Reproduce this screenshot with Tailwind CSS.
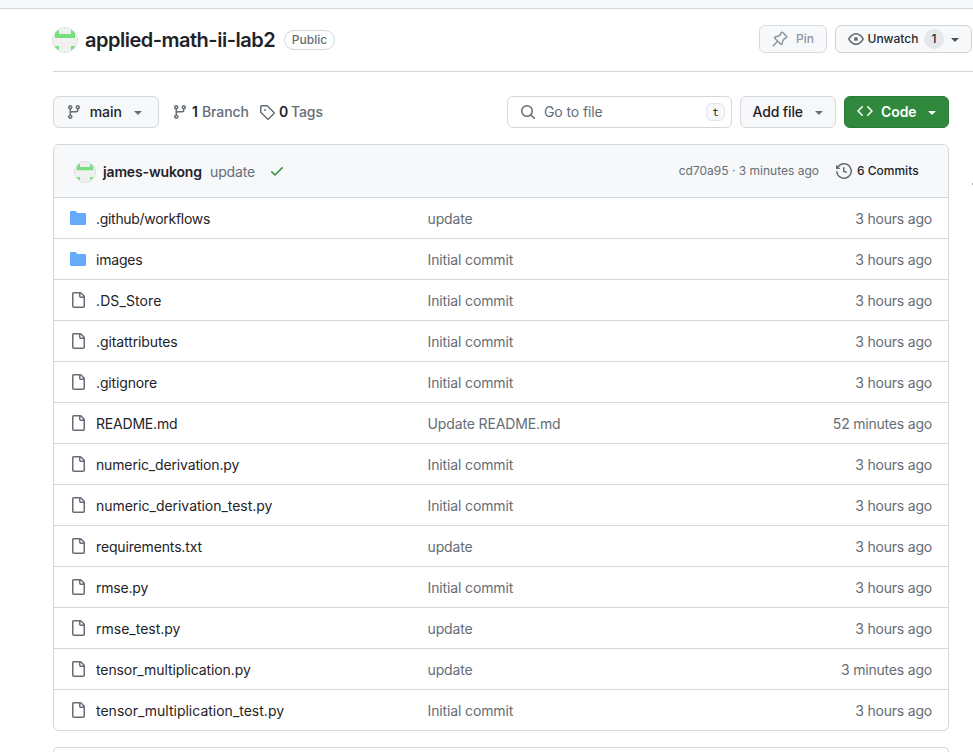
<!DOCTYPE html>
<html lang="en">
<head>
<meta charset="utf-8">
<title>applied-math-ii-lab2</title>
<script src="https://cdn.jsdelivr.net/npm/@tailwindcss/browser@4"></script>
</head>
<body class="relative h-[752px] w-[973px] overflow-hidden bg-white font-['Inter','Liberation_Sans',sans-serif] text-sm text-[#1f2328]">
<svg class="hidden">
  <symbol id="branch" viewBox="0 0 16 16"><path d="M9.5 3.25a2.25 2.25 0 1 1 3 2.122V6A2.5 2.5 0 0 1 10 8.5H6a1 1 0 0 0-1 1v1.128a2.251 2.251 0 1 1-1.5 0V5.372a2.25 2.25 0 1 1 1.5 0v1.836A2.493 2.493 0 0 1 6 7h4a1 1 0 0 0 1-1v-.628A2.25 2.25 0 0 1 9.5 3.25Zm-6 0a.75.75 0 1 0 1.5 0 .75.75 0 0 0-1.5 0Zm8.25-.75a.75.75 0 1 0 0 1.5.75.75 0 0 0 0-1.5ZM4.25 12a.75.75 0 1 0 0 1.5.75.75 0 0 0 0-1.5Z"/></symbol>
  <symbol id="caret" viewBox="0 0 16 16"><path d="m4.427 7.427 3.396 3.396a.25.25 0 0 0 .354 0l3.396-3.396A.25.25 0 0 0 11.396 7H4.604a.25.25 0 0 0-.177.427Z"/></symbol>
  <symbol id="folder" viewBox="0 0 16 16"><path d="M1 1A1 1 0 0 0 0 2v12a1 1 0 0 0 1 1h14a1 1 0 0 0 1-1V4a1 1 0 0 0-1-1H7.5a.25.25 0 0 1-.2-.1l-.9-1.2C6.07 1.26 5.55 1 5 1H1Z"/></symbol>
  <symbol id="file" viewBox="0 0 16 16"><path d="M2 1.75C2 .784 2.784 0 3.75 0h6.586c.464 0 .909.184 1.237.513l2.914 2.914c.329.328.513.773.513 1.237v9.586A1.75 1.75 0 0 1 13.25 16h-9.5A1.75 1.75 0 0 1 2 14.25Zm1.75-.25a.25.25 0 0 0-.25.25v12.5c0 .138.112.25.25.25h9.5a.25.25 0 0 0 .25-.25V6h-2.75A1.75 1.75 0 0 1 9 4.25V1.5Zm6.75.062V4.25c0 .138.112.25.25.25h2.688l-.011-.013-2.914-2.914-.013-.011Z"/></symbol>
  <symbol id="avatar" viewBox="0 0 24 24"><path fill="#f0f0f0" d="M0 0h24v24H0z"/><path fill="#76e07e" d="M2 2h4v4h12V2h4v8H2zM2 18h4v4H2zM18 18h4v4h-4z"/></symbol>
</svg>

<div class="h-[9px] border-b border-[#d0d7de] bg-[#f6f8fa]"></div>

<header class="ml-[53px] flex h-[63px] items-center border-b border-[#d0d7de] pb-px">
  <svg class="-ml-px size-[26px] rounded-full border border-[#d9dde1]"><use href="#avatar"/></svg>
  <h1 class="ml-[7px] w-[192px] whitespace-nowrap text-[20px] font-semibold leading-7 tracking-[-0.5px]">applied-math-ii-lab2</h1>
  <span class="ml-[7px] flex h-5 w-[51px] items-center justify-center rounded-full border border-[#d0d7de] text-xs font-medium text-[#656d76]">Public</span>
  <div class="mb-0.5 ml-auto flex gap-2">
    <button class="flex h-7 w-[68px] items-center rounded-md border border-[#d8dce1] bg-[#f6f8fa] pl-3 text-xs font-medium text-[#8c959f]">
      <svg class="mr-2 size-4 fill-current" viewBox="0 0 16 16"><path d="m11.294.984 3.722 3.722a1.75 1.75 0 0 1-.504 2.826l-1.327.613a3.089 3.089 0 0 0-1.707 2.084l-.584 2.454c-.317 1.332-1.972 1.8-2.94.832L5.75 11.311 1.78 15.28a.749.749 0 1 1-1.06-1.06l3.969-3.97-2.204-2.204c-.968-.968-.5-2.623.832-2.94l2.454-.584a3.08 3.08 0 0 0 2.084-1.707l.613-1.327a1.75 1.75 0 0 1 2.826-.504ZM6.283 9.723l2.732 2.731a.25.25 0 0 0 .42-.119l.584-2.454a4.586 4.586 0 0 1 2.537-3.098l1.328-.613a.25.25 0 0 0 .072-.404l-3.722-3.722a.25.25 0 0 0-.404.072l-.613 1.328a4.584 4.584 0 0 1-3.098 2.537l-2.454.584a.25.25 0 0 0-.119.42l2.731 2.732Z"/></svg>Pin
    </button>
    <button class="mr-px flex h-7 w-[137px] items-center whitespace-nowrap rounded-md border border-[#d0d4d9] bg-[#f6f8fa] pl-3 text-xs font-medium text-[#24292f]">
      <svg class="mr-[3.5px] size-4 shrink-0 fill-[#656d76]" viewBox="0 0 16 16"><path d="M8 2c1.981 0 3.671.992 4.933 2.078 1.27 1.091 2.187 2.345 2.637 3.023a1.62 1.62 0 0 1 0 1.798c-.45.678-1.367 1.932-2.637 3.023C11.67 13.008 9.981 14 8 14c-1.981 0-3.671-.992-4.933-2.078C1.797 10.83.88 9.576.43 8.898a1.62 1.62 0 0 1 0-1.798c.45-.677 1.367-1.931 2.637-3.022C4.33 2.992 6.019 2 8 2ZM1.679 7.932a.12.12 0 0 0 0 .136c.411.622 1.241 1.75 2.366 2.717C5.176 11.758 6.527 12.5 8 12.5c1.473 0 2.825-.742 3.955-1.715 1.124-.967 1.954-2.096 2.366-2.717a.12.12 0 0 0 0-.136c-.412-.621-1.242-1.75-2.366-2.717C10.824 4.242 9.473 3.5 8 3.5c-1.473 0-2.825.742-3.955 1.715-1.124.967-1.954 2.096-2.366 2.717ZM8 10a2 2 0 1 1-.001-3.999A2 2 0 0 1 8 10Z"/></svg>
      <span class="w-[50px]">Unwatch</span>
      <span class="ml-[6.5px] flex size-5 items-center justify-center rounded-full bg-[#e5e8ea]">1</span>
      <svg class="ml-[3px] size-4 fill-[#4b5159]"><use href="#caret"/></svg>
    </button>
  </div>
</header>

<main class="ml-[53px] w-[896px] pt-6">
  <div class="flex h-8 items-center">
    <button class="flex h-8 w-[106px] items-center rounded-md border border-[#d4d8dd] bg-[#f6f8fa] pl-3 font-medium">
      <svg class="mr-[7.5px] size-4 fill-[#656d76]"><use href="#branch"/></svg><span class="w-[32.5px] tracking-[-0.1px]">main</span>
      <svg class="ml-2 size-4 fill-[#656d76]"><use href="#caret"/></svg>
    </button>
    <a class="ml-[13px] flex w-[87px] items-center whitespace-nowrap font-medium tracking-[-0.05px] text-[#656d76]"><svg class="mr-1 size-4 fill-[#656d76]"><use href="#branch"/></svg><b class="mr-1 font-semibold text-[#1f2328]">1</b>Branch</a>
    <a class="flex items-center whitespace-nowrap font-medium tracking-[-0.15px] text-[#656d76]"><svg class="mr-1 size-4 fill-[#656d76]" viewBox="0 0 16 16"><path d="M1 7.775V2.75C1 1.784 1.784 1 2.75 1h5.025c.464 0 .91.184 1.238.513l6.25 6.25a1.75 1.75 0 0 1 0 2.474l-5.026 5.026a1.75 1.75 0 0 1-2.474 0l-6.25-6.25A1.752 1.752 0 0 1 1 7.775Zm1.5 0c0 .066.026.13.073.177l6.25 6.25a.25.25 0 0 0 .354 0l5.025-5.025a.25.25 0 0 0 0-.354l-6.25-6.25a.25.25 0 0 0-.177-.073H2.75a.25.25 0 0 0-.25.25ZM6 5a1 1 0 1 1 0 2 1 1 0 0 1 0-2Z"/></svg><b class="mr-[3px] font-semibold text-[#1f2328]">0</b>Tags</a>
    <div class="ml-auto flex gap-2">
      <div class="flex h-8 w-[225px] items-center rounded-md border border-[#d0d7de] pl-3 pr-1.5 tracking-[-0.1px] text-[#656d76]">
        <svg class="mr-2 size-4 fill-current" viewBox="0 0 16 16"><path d="M10.68 11.74a6 6 0 0 1-7.922-8.982 6 6 0 0 1 8.982 7.922l3.04 3.04a.749.749 0 1 1-1.06 1.06ZM11.5 7a4.499 4.499 0 1 0-8.997 0A4.499 4.499 0 0 0 11.5 7Z"/></svg>Go to file
        <kbd class="ml-auto flex h-[18px] w-[19px] items-center justify-center rounded-md border border-[#e1e6eb] bg-[#f6f8fa] pt-px font-['DejaVu_Sans_Mono',monospace] text-[11px] text-[#1f2328]">t</kbd>
      </div>
      <button class="flex h-8 w-24 items-center whitespace-nowrap rounded-md border border-[#d4d8dd] bg-[#f6f8fa] pl-[11.5px] font-medium tracking-[-0.15px]"><span class="w-[50.5px]">Add file</span><svg class="ml-2 size-4 fill-[#656d76]"><use href="#caret"/></svg></button>
      <button class="flex h-8 w-[105px] items-center rounded-md border border-[#2c7a3a] bg-[#2f883b] pl-3 font-semibold tracking-[-0.1px] text-white"><svg class="mb-0.5 mr-2 size-4 fill-current" viewBox="0 0 16 16"><path d="m11.28 3.22 4.25 4.25a.75.75 0 0 1 0 1.06l-4.25 4.25a.749.749 0 1 1-1.06-1.06L13.94 8l-3.72-3.72a.749.749 0 1 1 1.06-1.06Zm-6.56 0a.749.749 0 1 1 1.06 1.06L2.06 8l3.72 3.72a.749.749 0 1 1-1.06 1.06L.47 8.53a.75.75 0 0 1 0-1.06Z"/></svg><span class="w-[35px]">Code</span><svg class="ml-2 size-4 fill-current"><use href="#caret"/></svg></button>
    </div>
  </div>

  <section class="mt-4 h-[587px] overflow-hidden rounded-md border border-[#d0d7de]">
    <div class="flex h-[53px] items-center border-b border-[#d0d7de] bg-[#f6f8fa] pl-5 pr-[28px] pt-0.5">
      <svg class="size-[22px] rounded-full border border-[#d9dde1]"><use href="#avatar"/></svg>
      <span class="ml-[7px] w-[99px] whitespace-nowrap font-semibold tracking-[-0.15px]">james-wukong</span>
      <span class="ml-2 w-[45px] tracking-[-0.15px] text-[#656d76]">update</span>
      <svg class="mb-0.5 ml-[14px] size-4 fill-[#2f883b]" viewBox="0 0 16 16"><path d="M13.78 4.22a.75.75 0 0 1 0 1.06l-7.25 7.25a.75.75 0 0 1-1.06 0L2.22 9.28a.749.749 0 1 1 1.06-1.06L6 10.94l6.72-6.72a.75.75 0 0 1 1.06 0Z"/></svg>
      <span class="mb-0.5 ml-auto whitespace-nowrap text-xs text-[#656d76]">cd70a95 · 3 minutes ago</span>
      <svg class="mb-0.5 ml-[17px] size-4 fill-[#656d76]" viewBox="0 0 16 16"><path d="m.427 1.927 1.215 1.215a8.002 8.002 0 1 1-1.6 5.685.75.75 0 1 1 1.493-.154 6.5 6.5 0 1 0 1.18-4.458l1.358 1.358A.25.25 0 0 1 3.896 6H.25A.25.25 0 0 1 0 5.75V2.104a.25.25 0 0 1 .427-.177ZM7.75 4a.75.75 0 0 1 .75.75v2.992l2.028.812a.75.75 0 0 1-.557 1.392l-2.5-1A.751.751 0 0 1 7 8.25v-3.5A.75.75 0 0 1 7.75 4Z"/></svg>
      <span class="mb-0.5 ml-[5px] w-[63px] whitespace-nowrap text-xs font-medium">6 Commits</span>
    </div>
    <div id="files"></div>
  </section>

  <section class="mt-4 h-[5px] rounded-t-md border border-b-0 border-[#d0d7de]"></section>
</main>
<div class="absolute left-[972px] top-[183px] h-[2px] w-px bg-[#a9afb6]"></div>

<script>
const H = '3 hours ago', I = 'Initial commit', U = 'update';
const files = [
  ['.github/workflows', U, H, 1], ['images', I, H, 1], ['.DS_Store', I, H], ['.gitattributes', I, H],
  ['.gitignore', I, H], ['README.md', 'Update README.md', '52 minutes ago'], ['numeric_derivation.py', I, H],
  ['numeric_derivation_test.py', I, H], ['requirements.txt', U, H], ['rmse.py', I, H], ['rmse_test.py', U, H],
  ['tensor_multiplication.py', U, '3 minutes ago'], ['tensor_multiplication_test.py', I, H]];
// Per-name letter spacing; everything else uses the slightly tight default.
const tight = { '.github/workflows': 'tracking-[-0.3px]', '.DS_Store': 'tracking-[0.1px]', 'README.md': 'tracking-[-0.2px]',
  'numeric_derivation.py': 'tracking-[-0.15px]', 'requirements.txt': 'tracking-[-0.15px]', 'images': 'tracking-[-0.2px]', 'rmse.py': 'tracking-[-0.2px]',
  'rmse_test.py': 'tracking-[0px]', '.gitignore': 'tracking-[-0.15px]', 'tensor_multiplication_test.py': 'tracking-[0px]', 'numeric_derivation_test.py': 'tracking-[-0.04px]' };
document.getElementById('files').innerHTML = files.map(([name, msg, age, dir]) => `
  <div class="flex h-[41px] items-center border-b border-[#d0d7de] px-4 pt-0.5 last:border-b-0 last:pb-px">
    ${dir ? '<svg class="mb-0.5 size-4 fill-[#64abfb]"><use href="#folder"/></svg>' : '<svg class="mb-0.5 size-4 fill-[#656d76]"><use href="#file"/></svg>'}
    <span class="ml-[10px] w-[331.5px] ${tight[name] || 'tracking-[-0.1px]'}">${name}</span>
    <span class="tracking-[-0.13px] text-[#656d76]">${msg}</span>
    <span class="ml-auto tracking-[-0.2px] text-[#656d76]">${age}</span>
  </div>`).join('');
</script>
</body>
</html>
